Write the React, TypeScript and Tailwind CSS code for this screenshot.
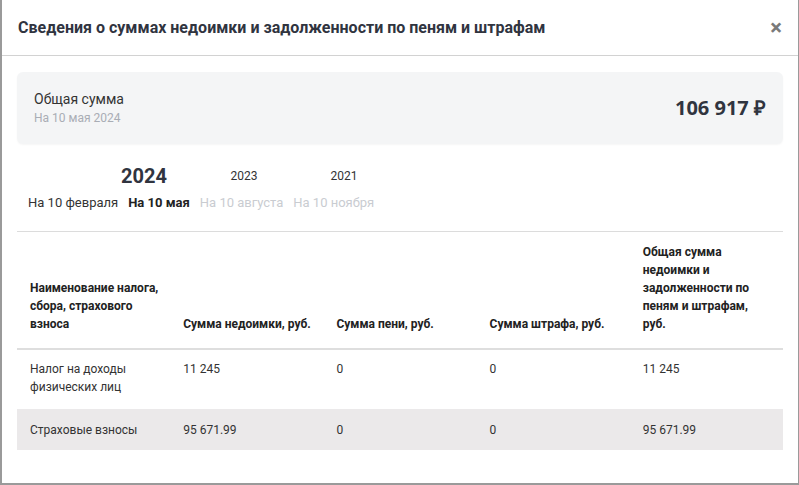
import React from 'react';

const years = [
  { label: '2024', active: true },
  { label: '2023', active: false },
  { label: '2021', active: false },
];

const months = [
  { label: 'На 10 февраля', state: 'normal' },
  { label: 'На 10 мая', state: 'active' },
  { label: 'На 10 августа', state: 'disabled' },
  { label: 'На 10 ноября', state: 'disabled' },
];

const columns = [
  'Наименование налога, сбора, страхового взноса',
  'Сумма недоимки, руб.',
  'Сумма пени, руб.',
  'Сумма штрафа, руб.',
  'Общая сумма недоимки и задолженности по пеням и штрафам, руб.',
];

const rows = [
  ['Налог на доходы физических лиц', '11 245', '0', '0', '11 245'],
  ['Страховые взносы', '95 671.99', '0', '0', '95 671.99'],
];

const App = () => {
  return (
    <div className="w-[799px] h-[485px] overflow-hidden bg-white border-l-2 border-b-2 border-r border-[#9a9a9a] font-['Roboto',sans-serif]">
      <div className="flex items-center justify-between h-[56px] pl-[16px] pr-[16px] border-b border-[#d2d2d2]">
        <h2 className="text-[16px] font-bold text-[#30343f]">
          Сведения о суммах недоимки и задолженности по пеням и штрафам
        </h2>
        <button className="text-[22px] leading-none font-bold text-[#7a7a7a]">×</button>
      </div>

      <div className="px-[15px] pt-[16px]">
        <div className="h-[72px] rounded-md bg-[#f4f5f6] shadow-[0_1px_2px_rgba(0,0,0,0.04)] flex justify-between pl-[17px] pr-[17px]">
          <div className="pt-[18px]">
            <div className="text-[14px] leading-[18px] text-[#333]">Общая сумма</div>
            <div className="mt-[2px] text-[12px] leading-[16px] text-[#a9adb5]">На 10 мая 2024</div>
          </div>
          <div className="flex items-center font-['Open_Sans',sans-serif] text-[20px] font-bold text-[#30343f]">
            106 917 ₽
          </div>
        </div>

        <div className="mt-[20px] flex items-center h-[24px] pl-[77px]">
          {years.map((y) => (
            <div
              key={y.label}
              className={
                y.active
                  ? 'w-[100px] text-center text-[20px] font-bold text-[#30343f]'
                  : 'w-[100px] text-center text-[12px] text-[#333]'
              }
            >
              {y.label}
            </div>
          ))}
        </div>

        <div className="mt-[6px] flex gap-[10px] pl-[11px] text-[13px] leading-[18px]">
          {months.map((m) => (
            <span
              key={m.label}
              className={
                m.state === 'active'
                  ? 'font-bold text-[#222]'
                  : m.state === 'disabled'
                  ? 'text-[#c9ccd1]'
                  : 'text-[#333]'
              }
            >
              {m.label}
            </span>
          ))}
        </div>

        <div className="mt-[19px] border-t border-[#dcdcdc]">
          <table className="w-full table-fixed border-collapse">
            <thead>
              <tr className="border-b-2 border-[#dedede]">
                {columns.map((c) => (
                  <th
                    key={c}
                    className="align-bottom text-left pl-[13px] pr-[10px] pt-[11px] pb-[15px] text-[12px] leading-[18px] font-bold text-[#222]"
                  >
                    {c}
                  </th>
                ))}
              </tr>
            </thead>
            <tbody>
              {rows.map((r, i) => (
                <tr key={i} className={i % 2 === 1 ? 'bg-[#ebe9ea]' : ''}>
                  {r.map((cell, j) => (
                    <td
                      key={j}
                      className={
                        i % 2 === 1
                          ? 'align-top pl-[13px] pr-[10px] pt-[12px] pb-[11px] text-[12px] leading-[18px] text-[#333]'
                          : 'align-top pl-[13px] pr-[10px] pt-[10px] pb-[13px] text-[12px] leading-[18px] text-[#333]'
                      }
                    >
                      {cell}
                    </td>
                  ))}
                </tr>
              ))}
            </tbody>
          </table>
        </div>
      </div>
    </div>
  );
};

export default App;
